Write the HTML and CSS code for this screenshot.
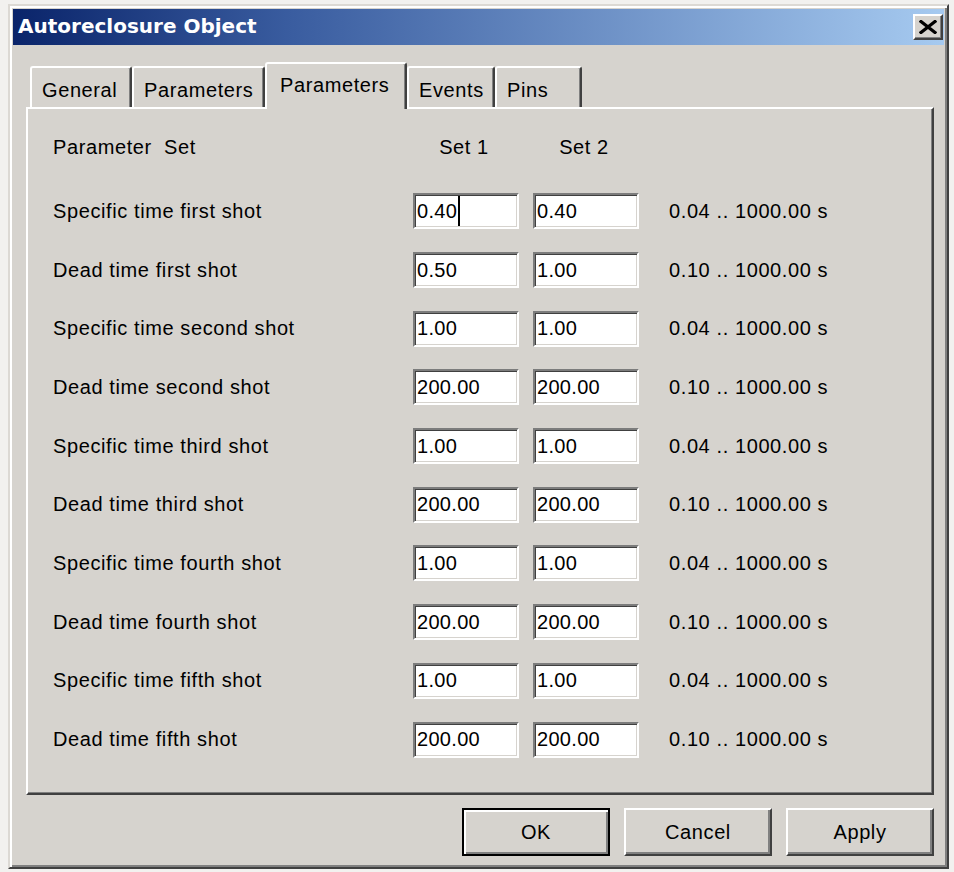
FILE: index.html
```html
<!DOCTYPE html>
<html lang="en">
<head>
<meta charset="utf-8">
<title>Autoreclosure Object</title>
<link rel="stylesheet" href="styles.css">
</head>
<body>
<div class="window">
  <div class="titlebar">
    <span class="title">Autoreclosure Object</span>
    <button class="close" type="button" aria-label="Close">
      <svg width="18" height="14" viewBox="0 0 18 14"><path d="M2 1.5 L16 12.5 M16 1.5 L2 12.5" stroke="#000" stroke-width="3.2" stroke-linecap="square"/></svg>
    </button>
  </div>

  <div class="client">
    <div class="tabs">
      <div class="tab w-general">General</div>
      <div class="tab w-params">Parameters</div>
      <div class="tab w-active active">Parameters</div>
      <div class="tab w-events">Events</div>
      <div class="tab w-pins">Pins</div>
    </div>

    <div class="panel">
      <div class="grid">
        <div class="label">Parameter&nbsp; Set</div>
        <div class="colhead">Set 1</div>
        <div class="colhead">Set 2</div>
        <div></div>

        <div class="label">Specific time first shot</div>
        <div class="field">0.40<span class="caret"></span></div>
        <div class="field">0.40</div>
        <div class="range">0.04 .. 1000.00 s</div>

        <div class="label">Dead time first shot</div>
        <div class="field">0.50</div>
        <div class="field">1.00</div>
        <div class="range">0.10 .. 1000.00 s</div>

        <div class="label">Specific time second shot</div>
        <div class="field">1.00</div>
        <div class="field">1.00</div>
        <div class="range">0.04 .. 1000.00 s</div>

        <div class="label">Dead time second shot</div>
        <div class="field">200.00</div>
        <div class="field">200.00</div>
        <div class="range">0.10 .. 1000.00 s</div>

        <div class="label">Specific time third shot</div>
        <div class="field">1.00</div>
        <div class="field">1.00</div>
        <div class="range">0.04 .. 1000.00 s</div>

        <div class="label">Dead time third shot</div>
        <div class="field">200.00</div>
        <div class="field">200.00</div>
        <div class="range">0.10 .. 1000.00 s</div>

        <div class="label">Specific time fourth shot</div>
        <div class="field">1.00</div>
        <div class="field">1.00</div>
        <div class="range">0.04 .. 1000.00 s</div>

        <div class="label">Dead time fourth shot</div>
        <div class="field">200.00</div>
        <div class="field">200.00</div>
        <div class="range">0.10 .. 1000.00 s</div>

        <div class="label">Specific time fifth shot</div>
        <div class="field">1.00</div>
        <div class="field">1.00</div>
        <div class="range">0.04 .. 1000.00 s</div>

        <div class="label">Dead time fifth shot</div>
        <div class="field">200.00</div>
        <div class="field">200.00</div>
        <div class="range">0.10 .. 1000.00 s</div>
      </div>
    </div>

    <div class="buttons">
      <button class="btn default" type="button">OK</button>
      <button class="btn" type="button">Cancel</button>
      <button class="btn" type="button">Apply</button>
    </div>
  </div>
</div>
</body>
</html>
```

FILE: styles.css
```css
/* Classic property-sheet dialog */
html, body {
  margin: 0;
  padding: 0;
}

body {
  width: 954px;
  height: 872px;
  overflow: hidden;
  background: #f2f1ef;
  font-family: "Liberation Sans", Arial, sans-serif;
  font-size: 20px;
  letter-spacing: 0.6px;
  color: #000;
}

.window {
  box-sizing: border-box;
  width: 941px;
  height: 865px;
  margin: 4px 0 0 8px;
  padding: 3px;
  background: #d6d3ce;
  border: 2px solid;
  border-color: #dcd9d4 #404040 #404040 #dcd9d4;
  box-shadow: inset 2px 2px #fff, inset -2px -2px #808080;
  display: flex;
  flex-direction: column;
}

/* Title bar */
.titlebar {
  height: 36px;
  flex: none;
  display: flex;
  align-items: center;
  justify-content: space-between;
  padding: 0 1px 0 5px;
  background: linear-gradient(90deg, #0a246a 0%, #3a5da0 30%, #a6caf0 100%);
}

.title {
  color: #fff;
  font-family: "DejaVu Sans", Verdana, sans-serif;
  font-weight: bold;
  font-size: 20px;
  letter-spacing: 0;
  padding-bottom: 3px;
}

.close {
  box-sizing: border-box;
  width: 30px;
  height: 26px;
  padding: 0;
  display: flex;
  align-items: center;
  justify-content: center;
  background: #d6d3ce;
  border: 2px solid;
  border-color: #fff #404040 #404040 #fff;
  box-shadow: inset -1px -1px #808080;
}

/* Client area */
.client {
  flex: 1;
  display: flex;
  flex-direction: column;
  padding: 17px 10px 0 13px;
}

/* Tab strip */
.tabs {
  height: 45px;
  display: flex;
  align-items: flex-end;
  padding-left: 4px;
}

.tab {
  box-sizing: border-box;
  height: 41px;
  padding: 11px 0 0 10px;
  background: #d6d3ce;
  border-top: 2px solid #fff;
  border-left: 2px solid #fff;
  border-right: 2px solid #404040;
  box-shadow: inset -1px 0 #808080;
  border-radius: 3px 3px 0 0;
  white-space: nowrap;
}

.w-general { width: 102px; }
.w-params  { width: 133px; }
.w-active  { width: 142px; }
.w-events  { width: 88px; }
.w-pins    { width: 87px; }

.tab.active {
  height: 47px;
  margin-bottom: -2px;
  padding: 10px 0 0 13px;
  position: relative;
  z-index: 1;
}

/* Page panel */
.panel {
  box-sizing: border-box;
  height: 688px;
  padding: 4px 0 0 25px;
  border: 2px solid;
  border-color: #fff #404040 #404040 #fff;
  box-shadow: inset -1px -1px #808080;
}

.grid {
  display: grid;
  grid-template-columns: 360px 120px 136px 1fr;
  grid-template-rows: 69px repeat(10, 58.7px);
  align-items: center;
}

.colhead {
  width: 106px;
  text-align: center;
  padding-right: 4px;
  box-sizing: border-box;
}

.field {
  box-sizing: border-box;
  width: 106px;
  height: 36px;
  padding: 0 0 0 2px;
  display: flex;
  align-items: center;
  background: #fff;
  border: 2px solid;
  border-color: #7c7c7c #fff #fff #7c7c7c;
  box-shadow: inset 1px 1px #404040, inset -1px -1px #d6d3ce;
  letter-spacing: 0.3px;
}

.caret {
  display: inline-block;
  width: 2px;
  height: 30px;
  margin-left: 1px;
  background: #000;
}

/* Dialog buttons */
.buttons {
  display: flex;
  justify-content: flex-end;
  gap: 14px;
  margin-top: 13px;
}

.btn {
  box-sizing: border-box;
  width: 148px;
  height: 48px;
  padding: 0;
  background: #d6d3ce;
  font: inherit;
  letter-spacing: 0.6px;
  color: #000;
  border: 2px solid;
  border-color: #fff #404040 #404040 #fff;
  box-shadow: inset -2px -2px #808080;
}

.btn.default {
  border: 2px solid #000;
  box-shadow: inset 2px 2px #fff, inset -2px -2px #808080;
}
```
